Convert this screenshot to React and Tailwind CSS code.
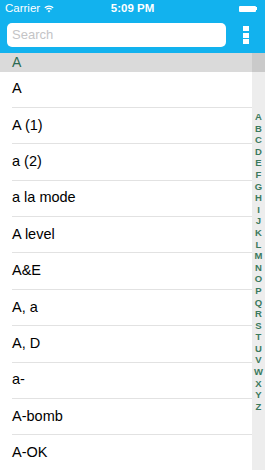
import React from "react";

const rows = ["A", "A (1)", "a (2)", "a la mode", "A level", "A&E", "A, a", "A, D", "a-", "A-bomb", "A-OK"];
const letters = "ABCDEFGHIJKLMNOPQRSTUVWXYZ".split("");

export default function App() {
  return (
    <div className="w-[265px] h-[470px] overflow-hidden bg-white relative" style={{ fontFamily: '"Liberation Sans", Arial, sans-serif' }}>
      <div className="bg-[#12b2ee] h-[53px] flex flex-col">
        <div className="h-[17px] flex items-center justify-between px-[5px] text-white text-[11.5px] relative">
          <div className="flex items-center gap-[4px]">
            <span>Carrier</span>
            <svg width="10" height="8" viewBox="0 0 10 8" fill="none">
              <path d="M0.8 2.8 A6 6 0 0 1 9.2 2.8" stroke="white" strokeWidth="1.3" />
              <path d="M2.4 4.4 A3.6 3.6 0 0 1 7.6 4.4" stroke="white" strokeWidth="1.3" />
              <path d="M5 7.6 L3.6 6 A2 2 0 0 1 6.4 6 Z" fill="white" />
            </svg>
          </div>
          <span className="absolute left-1/2 -translate-x-1/2 font-bold">5:09 PM</span>
          <div className="flex items-center mr-[3px]">
            <div className="w-[17px] h-[6px] bg-white rounded-[1px]" />
            <div className="w-[1px] h-[3px] bg-white" />
          </div>
        </div>
        <div className="flex items-center pl-[7px] pr-[16px] mt-[6px]">
          <div className="w-[219px] h-[24px] bg-white rounded-[5px] flex items-center pl-[5px] text-[13px] text-[#c4c4c6]">Search</div>
          <div className="ml-auto flex flex-col gap-[1.5px]">
            <div className="w-[6px] h-[5px] bg-white" />
            <div className="w-[6px] h-[5px] bg-white" />
            <div className="w-[6px] h-[5px] bg-white" />
          </div>
        </div>
      </div>
      <div className="h-[18.5px] bg-[#dadada] flex items-center pl-[12px] text-[14px] text-[#2c6a52]">A</div>
      <div>
        {rows.map((r) => (
          <div key={r} className="h-[36.4px] ml-[12px] mr-[13px] border-b border-[#e2e2e2] flex items-center text-[14.5px] text-black">
            {r}
          </div>
        ))}
      </div>
      <div className="absolute right-0 top-[53px] bottom-0 w-[13px] bg-black/[0.07] flex flex-col items-center pt-[58px]">
        {letters.map((l) => (
          <div key={l} className="h-[11.6px] leading-[11.6px] text-[9.5px] font-bold text-[#3b7a5e]">{l}</div>
        ))}
      </div>
    </div>
  );
}
